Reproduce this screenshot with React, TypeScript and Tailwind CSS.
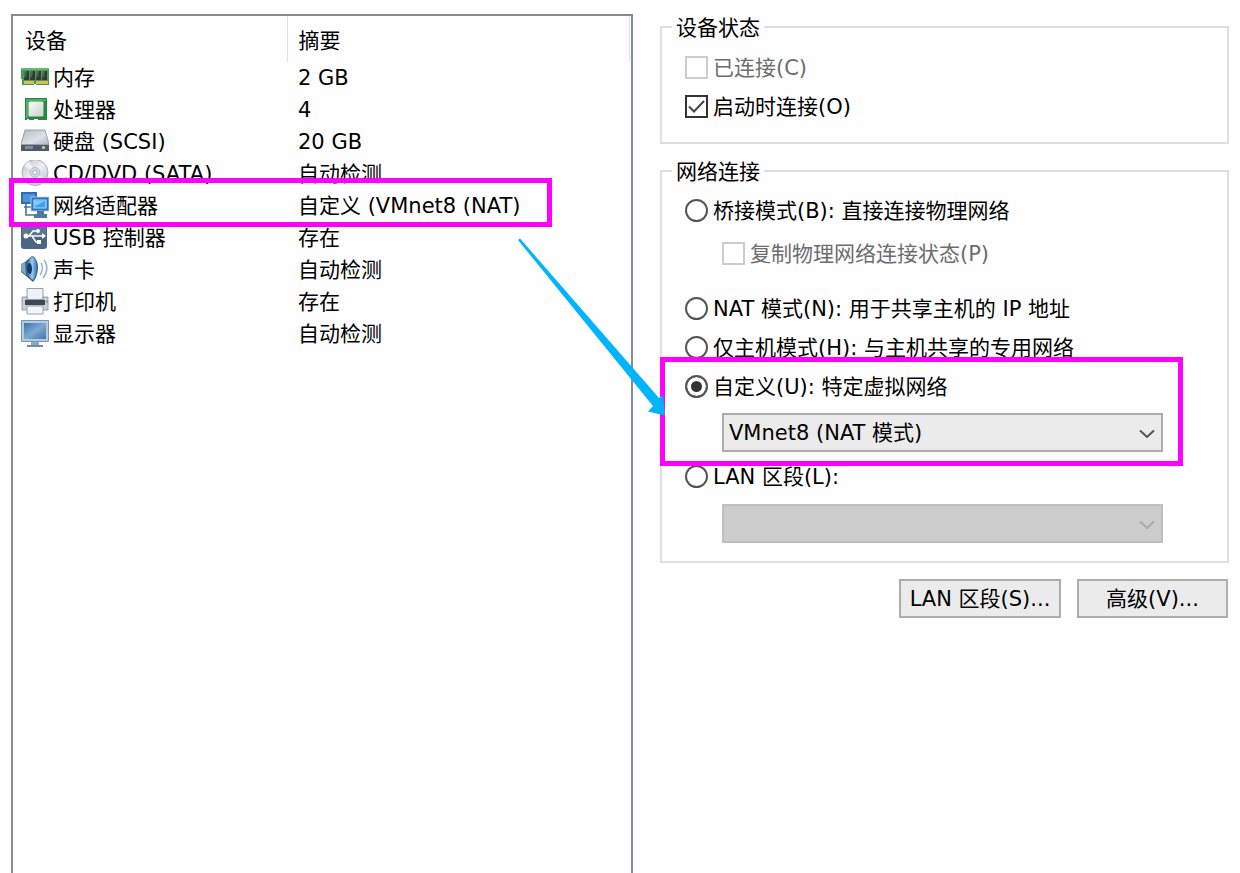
import { useState } from 'react'
import type { ReactNode } from 'react'
import clsx from 'clsx'

function MemoryIcon() {
  return (
    <svg className="h-7 w-7" viewBox="0 0 28 28">
      <path d="M0 4h28v17H15v-1h-2v1H1v-6H0z" fill="#3f9f52" />
      <path d="M0 4h28v2H0z" fill="#64b873" />
      <path d="M4 7h4v9H3zM10 7h4v9H9zM16 7h4v9h-5zM22 7h4v9h-5z" fill="#333a38" />
      <path d="M4 7h2l-1 6H3zM10 7h2l-1 6H9zM16 7h2l-1 6h-2zM22 7h2l-1 6h-2z" fill="#59605e" />
      <path d="M3 17h10v3H3zM15 17h12v3H15z" fill="#e9b552" />
    </svg>
  )
}

function CpuIcon() {
  return (
    <svg className="h-7 w-7" viewBox="0 0 28 28">
      <defs>
        <linearGradient id="cpu" x1="0" y1="0" x2="1" y2="1">
          <stop offset="0" stopColor="#fafafa" />
          <stop offset="1" stopColor="#cdd0d0" />
        </linearGradient>
      </defs>
      <path d="M4 2h22v22h-9v-1h-4v1H8v-1H6v1H4z" fill="#1f8a3b" />
      <path d="M5 3h20v2H7v17H5z" fill="#4fae64" />
      <rect x="7.500" y="5.500" width="15" height="15" rx="1" fill="url(#cpu)" />
    </svg>
  )
}

function DiskIcon() {
  return (
    <svg className="h-7 w-7" viewBox="0 0 28 28">
      <defs>
        <linearGradient id="disk" x1="0" y1="0" x2="1" y2="1">
          <stop offset="0" stopColor="#b3bcc6" />
          <stop offset="0.6" stopColor="#dde2e6" />
          <stop offset="1" stopColor="#a9b2bb" />
        </linearGradient>
      </defs>
      <path d="M4 2h20l4 14v1H0v-1z" fill="url(#disk)" stroke="#87909a" strokeWidth="0.8" />
      <path d="M0 16h28v7H0z" fill="#4f5a68" />
      <path d="M0 16h28v1H0z" fill="#98a2ad" />
      <path d="M4 18h8v3H4z" fill="#7d8b9c" />
      <circle cx="22.5" cy="19.5" r="1.6" fill="#d9d26e" />
    </svg>
  )
}

function DiscIcon() {
  return (
    <svg className="h-7 w-7" viewBox="0 0 28 28">
      <defs>
        <linearGradient id="disc" x1="0" y1="0" x2="1" y2="1">
          <stop offset="0" stopColor="#b9c0cb" />
          <stop offset="0.5" stopColor="#eef0f4" />
          <stop offset="1" stopColor="#b4bbc8" />
        </linearGradient>
      </defs>
      <circle cx="14" cy="12.500" r="13" fill="url(#disc)" stroke="#a9b0bd" />
      <path d="M14 12.500L3 6a13 13 0 0 1 5-5zM14 12.500l11 7a13 13 0 0 1-5 5z" fill="#fff" opacity="0.6" />
      <circle cx="14" cy="12.500" r="5" fill="#d3d8e1" stroke="#b3bac7" />
      <circle cx="14" cy="12.500" r="2" fill="#fff" stroke="#a3abba" />
    </svg>
  )
}

function NetworkIcon() {
  return (
    <svg className="h-7 w-7" viewBox="0 0 28 28">
      <path d="M0 0h16v12H0z" fill="#2f6cb2" />
      <path d="M2 2h12v8H2z" fill="#4e94d6" />
      <path d="M5 12v11h9M3 15h7" fill="none" stroke="#4a719c" strokeWidth="1.6" />
      <path d="M10 5h18v14H10z" fill="#2c76bd" stroke="#b9d8f0" strokeWidth="0.8" />
      <path d="M13 8h12v8H13z" fill="#3fa2ec" stroke="#a9dcfb" strokeWidth="1.2" />
      <path d="M14 9h10l-10 5z" fill="#85c9f7" />
      <path d="M16 19h7v3h-7zM13 22h13v4H13z" fill="#4d7ba8" />
    </svg>
  )
}

function UsbIcon() {
  return (
    <svg className="h-7 w-7" viewBox="0 0 28 28">
      <rect x="0" y="0" width="26" height="25" rx="3" fill="#4b6684" />
      <path d="M1 2h24v9H1z" fill="#5b7693" />
      <g fill="none" stroke="#fff" strokeWidth="1.5">
        <path d="M4 12h18M8 12l4-5h4M11 12l4 6h3" />
      </g>
      <circle cx="5" cy="12" r="2.5" fill="#fff" />
      <circle cx="17" cy="7" r="1.9" fill="#fff" />
      <path d="M16 16h4v4h-4zM21 9l4 3-4 3z" fill="#fff" />
    </svg>
  )
}

function SoundIcon() {
  return (
    <svg className="h-7 w-7" viewBox="0 0 28 28">
      <defs>
        <linearGradient id="sound" x1="0" y1="0" x2="1" y2="0">
          <stop offset="0" stopColor="#2e6ba5" />
          <stop offset="0.5" stopColor="#9ccbee" />
          <stop offset="1" stopColor="#3676b4" />
        </linearGradient>
      </defs>
      <path d="M0 8l4-2 7-6c3 1 6 5 6 11s-2 12-5 15L5 20l-5-4z" fill="#34628f" />
      <path d="M0 8l4-2 1 13-5-4z" fill="#8aa4bd" />
      <path d="M11 1c3 1 5 5 5 10s-2 11-4 13c-4-2-6-7-6-12s2-9 5-11z" fill="url(#sound)" />
      <path d="M8 7c2 0 3 3 3 6s-1 5-2 5-3-2-3-5 1-6 2-6z" fill="#153a66" />
      <g fill="none" stroke="#8fb2d0" strokeWidth="1.400">
        <path d="M20 7c2 3 2 8-1 12" />
        <path d="M23 4c4 5 4 12-1 18" />
      </g>
    </svg>
  )
}

function PrinterIcon() {
  return (
    <svg className="h-7 w-7" viewBox="0 0 28 28">
      <path d="M6 0.500h16v11H6z" fill="#eef1f6" stroke="#969eb0" />
      <path d="M1 9h5v3h16V9h5v13H1z" fill="#c8cedb" stroke="#858da0" strokeWidth="0.8" />
      <path d="M4 12h20v5H4z" fill="#414750" />
      <path d="M25 12h2v3h-2z" fill="#69c879" />
      <path d="M6 18h16v8H6z" fill="#f3f5f9" stroke="#969eb0" />
    </svg>
  )
}

function DisplayIcon() {
  return (
    <svg className="h-7 w-7" viewBox="0 0 28 28">
      <defs>
        <linearGradient id="display" x1="0" y1="0" x2="1" y2="1">
          <stop offset="0" stopColor="#3c73ab" />
          <stop offset="0.5" stopColor="#7fa9d0" />
          <stop offset="1" stopColor="#4077ae" />
        </linearGradient>
      </defs>
      <path d="M0.5 0.5h27v21h-27z" fill="#b4cbe0" stroke="#7595b5" />
      <path d="M3 3h22v16H3z" fill="url(#display)" />
      <path d="M10 22h8v3h-8z" fill="#8ea8c1" />
      <path d="M6 25h16v2H6z" fill="#6d8dac" />
    </svg>
  )
}

const devices = [
  { icon: <MemoryIcon />, name: '内存', summary: '2 GB' },
  { icon: <CpuIcon />, name: '处理器', summary: '4' },
  { icon: <DiskIcon />, name: '硬盘 (SCSI)', summary: '20 GB' },
  { icon: <DiscIcon />, name: 'CD/DVD (SATA)', summary: '自动检测' },
  { icon: <NetworkIcon />, name: '网络适配器', summary: '自定义 (VMnet8 (NAT)', marked: true },
  { icon: <UsbIcon />, name: 'USB 控制器', summary: '存在' },
  { icon: <SoundIcon />, name: '声卡', summary: '自动检测' },
  { icon: <PrinterIcon />, name: '打印机', summary: '存在' },
  { icon: <DisplayIcon />, name: '显示器', summary: '自动检测' },
]

function DeviceTable() {
  return (
    <div className="relative border-2 border-b-0 border-[#878b99]">
      <table className="w-full table-fixed border-collapse text-left">
        <thead>
          <tr className="h-[46px]">
            <th className="w-[274px] border-r border-[#e2e2e2] pt-1 pl-3 font-normal">设备</th>
            <th className="border-r border-[#e2e2e2] pt-1 pl-[11px] font-normal">摘要</th>
            <th className="w-[2px] p-0"></th>
          </tr>
        </thead>
        <tbody>
          {devices.map((d) => (
            <tr key={d.name} className="h-8">
              <td className="relative p-0 pl-2">
                <div className="flex h-8 items-center gap-1">
                  {d.icon}
                  <span>{d.name}</span>
                </div>
                {d.marked && (
                  <div className="absolute -top-3 -left-1 z-10 h-[49px] w-[543px] border-5 border-[#ff00ff]"></div>
                )}
              </td>
              <td className="p-0 pl-[11px]">{d.summary}</td>
              <td className="p-0"></td>
            </tr>
          ))}
        </tbody>
      </table>
      {/* arrow from the adapter row to its settings */}
      <svg className="absolute top-[221px] left-[503px] z-20 h-[182px] w-[152px]" viewBox="0 0 152 182">
        <path d="M2 3L4 1.5L143 161L147 158L149 178.500L132 174.500L137 169Z" fill="#00b4ff" />
      </svg>
    </div>
  )
}

function Group({ title, className, children }: { title: string; className: string; children: ReactNode }) {
  return (
    <fieldset className={clsx('min-w-0 border-2 border-[#dfdfdf] pr-16 pl-[23px]', className)}>
      <legend className="-ml-[13px] h-[30px] px-1">{title}</legend>
      {children}
    </fieldset>
  )
}

type CheckProps = {
  label: string
  checked: boolean
  disabled?: boolean
  onChange?: (checked: boolean) => void
}

function Check({ label, checked, disabled, onChange }: CheckProps) {
  return (
    <label className={clsx('flex h-[39px] items-center gap-[5px]', disabled && 'text-[#6d6d6d]')}>
      <span className="relative h-[23px] w-[23px] shrink-0">
        <input
          type="checkbox"
          checked={checked}
          disabled={disabled}
          onChange={(e) => onChange?.(e.target.checked)}
          className="block h-[23px] w-[23px] appearance-none border-2 border-[#333] bg-white disabled:border-[#ccc]"
        />
        {checked && (
          <svg className="pointer-events-none absolute inset-0 h-[23px] w-[23px]" viewBox="0 0 23 23">
            <path d="M4 11.500L9 16.500L19 6" fill="none" stroke="#444" strokeWidth="2" />
          </svg>
        )}
      </span>
      <span>{label}</span>
    </label>
  )
}

type RadioProps = {
  label: string
  value: string
  mode: string
  onSelect: (value: string) => void
}

function Radio({ label, value, mode, onSelect }: RadioProps) {
  return (
    <label className="flex h-[39px] items-center gap-[5px]">
      <input
        type="radio"
        name="mode"
        checked={mode === value}
        onChange={() => onSelect(value)}
        className="h-[23px] w-[23px] shrink-0 appearance-none rounded-full border-2 border-[#555] bg-white checked:bg-[#333] checked:shadow-[inset_0_0_0_4px_white]"
      />
      <span>{label}</span>
    </label>
  )
}

function Dropdown({ label, options, disabled }: { label: string; options: string[]; disabled?: boolean }) {
  return (
    <div className="relative ml-[37px]">
      <select
        aria-label={label}
        disabled={disabled}
        className="block h-[39px] w-full appearance-none border-2 border-[#adadad] bg-[#ebebeb] px-[5px] text-black disabled:border-[#bfbfbf] disabled:bg-[#ccc] disabled:opacity-100"
      >
        {options.map((o) => (
          <option key={o}>{o}</option>
        ))}
      </select>
      <svg
        className={clsx('pointer-events-none absolute top-4 right-2 h-[10px] w-4', disabled ? 'text-[#aaa]' : 'text-[#555]')}
        viewBox="0 0 16 10"
      >
        <path d="M1 1.500L8 8L15 1.500" fill="none" stroke="currentColor" strokeWidth="2" />
      </svg>
    </div>
  )
}

function Button({ children, className }: { children: ReactNode; className: string }) {
  return (
    <button type="button" className={clsx('h-[39px] border-2 border-[#adadad] bg-[#ebebeb]', className)}>
      {children}
    </button>
  )
}

export default function App() {
  const [connectOnStart, setConnectOnStart] = useState(true)
  const [mode, setMode] = useState('custom')

  return (
    <main className="grid min-h-screen grid-cols-[622fr_569fr] gap-[27px] bg-[#fefefe] px-[11px] pt-[14px] font-['DejaVu_Sans','Noto_Sans_CJK_SC',sans-serif] text-[21px] leading-8 whitespace-nowrap text-black">
      <DeviceTable />

      <div className="-mt-[2px]">
        <Group title="设备状态" className="pt-[6px] pb-4">
          <Check label="已连接(C)" checked={false} disabled />
          <Check label="启动时连接(O)" checked={connectOnStart} onChange={setConnectOnStart} />
        </Group>

        <Group title="网络连接" className="mt-3 pt-[5px] pb-[18px]">
          <Radio label="桥接模式(B): 直接连接物理网络" value="bridged" mode={mode} onSelect={setMode} />
          <div className="mt-1 mb-4 ml-[37px]">
            <Check label="复制物理网络连接状态(P)" checked={false} disabled />
          </div>
          <Radio label="NAT 模式(N): 用于共享主机的 IP 地址" value="nat" mode={mode} onSelect={setMode} />
          <Radio label="仅主机模式(H): 与主机共享的专用网络" value="host" mode={mode} onSelect={setMode} />
          <div className="relative">
            <Radio label="自定义(U): 特定虚拟网络" value="custom" mode={mode} onSelect={setMode} />
            <div className="mt-[7px] mb-[5px]">
              <Dropdown label="虚拟网络" options={['VMnet8 (NAT 模式)']} />
            </div>
            <div className="pointer-events-none absolute -top-[10px] -right-5 -bottom-[14px] -left-[25px] z-10 border-5 border-[#ff00ff]"></div>
          </div>
          <Radio label="LAN 区段(L):" value="lan" mode={mode} onSelect={setMode} />
          <div className="mt-2">
            <Dropdown label="LAN 区段" options={['']} disabled />
          </div>
        </Group>

        <div className="mt-4 flex justify-end gap-4 pr-[1px]">
          <Button className="w-[162px]">LAN 区段(S)...</Button>
          <Button className="w-[151px]">高级(V)...</Button>
        </div>
      </div>
    </main>
  )
}
